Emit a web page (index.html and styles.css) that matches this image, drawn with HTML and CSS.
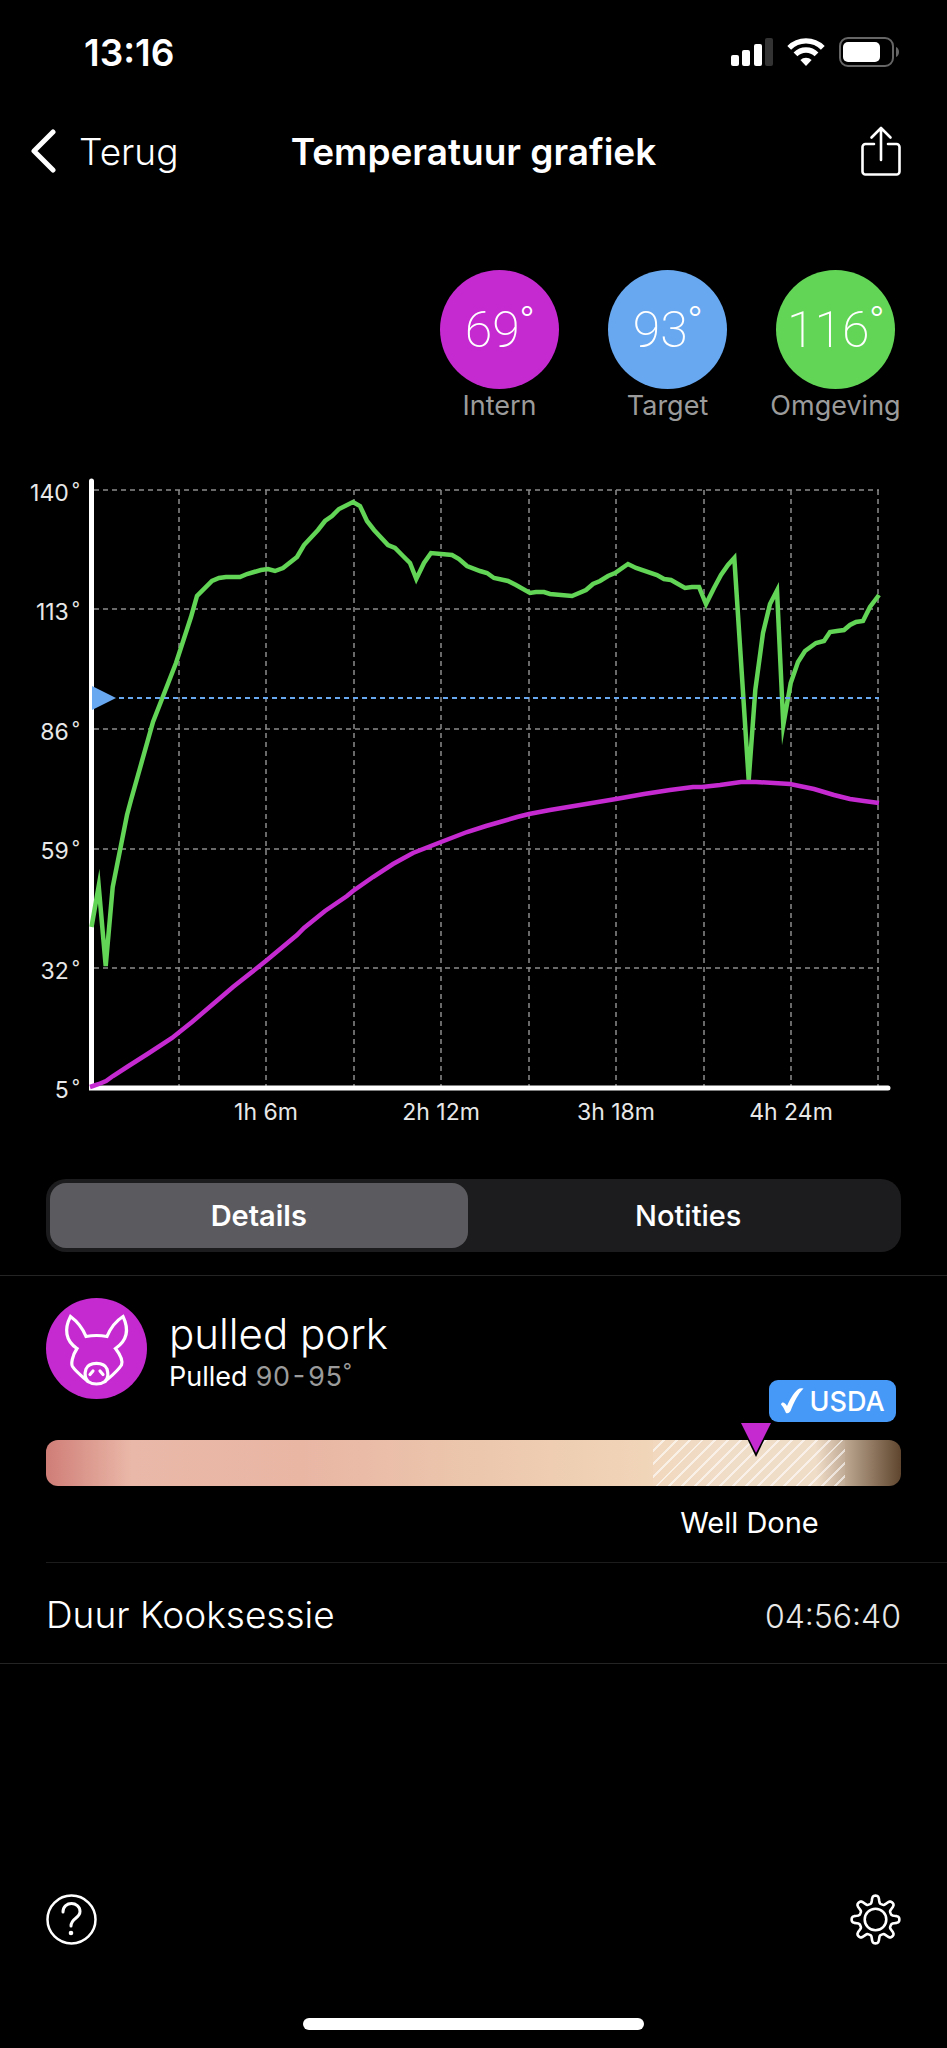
FILE: index.html
```html
<!DOCTYPE html>
<html lang="nl">
<head>
  <meta charset="UTF-8" />
  <meta name="viewport" content="width=device-width, initial-scale=1.0" />
  <title>Temperatuur grafiek</title>
  <link rel="stylesheet" href="styles.css">
</head>
<body>
  <div class="app">
    <div class="status-bar">
      <span class="clock">13:16</span>
      <div class="status-icons">
        <svg width="42" height="28" viewBox="0 0 42 28" fill="#fff">
          <rect x="0" y="17" width="8" height="11" rx="2"/>
          <rect x="11" y="12" width="8" height="16" rx="2"/>
          <rect x="23" y="6" width="8" height="22" rx="2"/>
          <rect x="34" y="0" width="8" height="28" rx="2" fill="#333"/>
        </svg>
        <svg width="38" height="28" viewBox="0 0 38 28" fill="none" stroke="#fff" stroke-width="5.4">
          <path d="M2.2 9.8a23.8 23.8 0 0 1 33.6 0"/>
          <path d="M8.5 16.3a14.8 14.8 0 0 1 21 0"/>
          <path d="M19 28l-5.6-6a8 8 0 0 1 11.2 0z" fill="#fff" stroke="none"/>
        </svg>
        <svg width="60" height="30" viewBox="0 0 60 30">
          <rect x="1" y="1" width="53" height="28" rx="8" fill="none" stroke="#666" stroke-width="2"/>
          <rect x="4" y="5" width="37" height="20" rx="5" fill="#fff"/>
          <path d="M57 10c4 1.500 4 8.500 0 10z" fill="#666"/>
        </svg>
      </div>
    </div>

    <header class="nav">
      <button class="back" type="button">
        <svg width="26" height="44" viewBox="0 0 26 44" fill="none" stroke="#fff" stroke-width="5" stroke-linecap="round" stroke-linejoin="round"><path d="M23 3L4 22l19 19"/></svg>
        <span>Terug</span>
      </button>
      <h1>Temperatuur grafiek</h1>
      <button class="share" type="button" aria-label="Delen">
        <svg width="40" height="50" viewBox="0 0 40 50" fill="none" stroke="#fff" stroke-width="2.600" stroke-linecap="round" stroke-linejoin="round">
          <path d="M13 18H4.500a3 3 0 0 0-3 3v24.500a3 3 0 0 0 3 3h31a3 3 0 0 0 3-3V21a3 3 0 0 0-3-3H27M20 34V2M10.500 11.500L20 2l9.500 9.500"/>
        </svg>
      </button>
    </header>

    <section class="probes">
      <div class="probe">
        <div class="circle intern"><span>69<span class="deg">°</span></span></div>
        <div class="probe-name">Intern</div>
      </div>
      <div class="probe">
        <div class="circle target"><span>93<span class="deg">°</span></span></div>
        <div class="probe-name">Target</div>
      </div>
      <div class="probe">
        <div class="circle omgeving"><span>116<span class="deg">°</span></span></div>
        <div class="probe-name">Omgeving</div>
      </div>
    </section>

    <svg class="chart" viewBox="0 470 947 660" role="img" aria-label="Temperatuur grafiek">
      <g class="grid-lines">
        <path d="M94 490H879M94 609H879M94 729H879M94 849H879M94 968H879"/>
        <path d="M179 490V1086M266 490V1086M354 490V1086M441 490V1086M529 490V1086M616 490V1086M704 490V1086M791 490V1086M878 490V1086"/>
      </g>
      <path class="axis" d="M91.500 481V1088H888"/>

      <polyline class="line green" points="91.500,927 98.700,886 105.700,966 112.700,887 127,815 131,800 153,722 176,663 191,617 197,596 212,581 219,578 226,577 240,577 247,574 254,572 261,570 268,569 275,571 283,568 297,557 304,545 318,530 325,521 332,516 339,509 353,502 360,506 367,521 374,530 388,545 395,548 403,556 410,563 416.300,579 424,563 431,553 452,555 459,559 467,566 480,571 487,573 494,578 508,581 516,585 530,593 536,592 544,592 550,594 572,596 586,590 593,584 600,581 608,576 615,573 628,564 636,568 657,575 664,579 671,580 685,588 692,587 699,587 706,604 714,588 721,575 728,565 734.300,558 748.700,780 755.300,690 763,633 770,604 777,590.500 783.300,725 790.700,683 798,662 805,651 816,643 824,641 830,632 837,631 844,630 850,625 856,622 863,621 870,607 879,595"/>
      <polyline class="line magenta" points="90,1087 99,1084 106,1081 113,1076 127,1067 149,1053 172,1038 192,1022 226,993 233,987 257,968 267,960 297,935 304,928 325,911 347,896 353,891 373,877 393,864 413,853 441,842 467,832 486,826 500,822 517,817 529,814 550,810 574,806 616,799 644,794 670,790 693,787 702,787 720,785 741,782 756,782 790,784 814,789 834,795 850,799 864,801 879,803"/>
      <path class="target-line" d="M119 698H879"/>
      <path class="target-arrow" d="M92 686L116 698L92 710z"/>

      <g class="tick y-tick">
        <text x="80" y="501">140<tspan class="tick-deg" dx="3" dy="-5">°</tspan></text>
        <text x="80" y="620">113<tspan class="tick-deg" dx="3" dy="-5">°</tspan></text>
        <text x="80" y="740">86<tspan class="tick-deg" dx="3" dy="-5">°</tspan></text>
        <text x="80" y="859">59<tspan class="tick-deg" dx="3" dy="-5">°</tspan></text>
        <text x="80" y="979">32<tspan class="tick-deg" dx="3" dy="-5">°</tspan></text>
        <text x="80" y="1098">5<tspan class="tick-deg" dx="3" dy="-5">°</tspan></text>
      </g>
      <g class="tick x-tick">
        <text x="266" y="1120">1h 6m</text>
        <text x="441" y="1120">2h 12m</text>
        <text x="616" y="1120">3h 18m</text>
        <text x="791" y="1120">4h 24m</text>
      </g>
    </svg>

    <div class="tabs" role="tablist">
      <button class="tab active" type="button" role="tab" aria-selected="true">Details</button>
      <button class="tab" type="button" role="tab" aria-selected="false">Notities</button>
    </div>

    <section class="details">
      <div class="meat">
        <svg class="pig" width="101" height="101" viewBox="0 0 101 101">
          <circle cx="50.500" cy="50.500" r="50.500" fill="#c42ad0"/>
          <g fill="none" stroke="#fff" stroke-width="3.200" stroke-linecap="round" stroke-linejoin="miter">
            <path d="M40 38.500C37 31 32 24 24.500 18.500C18 31 19.500 43 31 50.500C26 58 25 66 26.500 68.500C30 74 37 79 42 83.500Q45.500 86 50.500 86T59 83.500C64 79 71 74 75.500 67C77 63 74.500 57 69.500 50.500C80.500 43 83.500 32 77 18.500C70 23 64.500 30 61 38.500Q50.500 36.500 40 38.500z"/>
            <path d="M42 83.500C38 79 39 74 40 71C43 63.500 58 63.500 61 71C62 75 63 79 59 83.500M47 73l-3 3.500M54 73l3 3.500"/>
          </g>
        </svg>
        <div class="meat-text">
          <h2>pulled pork</h2>
          <p>Pulled <span class="meat-range">90-95<span class="deg">°</span></span></p>
        </div>
        <div class="badge">
          <svg width="24" height="26" viewBox="0 0 24 26" fill="#fff"><path d="M1 16.500C2 13 5 14.500 7 18C11 9 15 3 19.500 0.500Q22 0 23.500 0.500C18 6 14 14 10.500 23Q8.500 26 6 25C4.500 22 3.500 19 1 16.500z"/></svg>
          <span>USDA</span>
        </div>
      </div>

      <div class="scale">
        <div class="scale-range"></div>
        <svg class="scale-marker" width="34" height="36" viewBox="0 0 34 36"><path d="M0 0H34L17 35z" fill="#000"/><path d="M2 1H32L17 31z" fill="#c42ad0"/></svg>
      </div>
      <div class="scale-label">Well Done</div>

      <div class="row">
        <span class="row-name">Duur Kooksessie</span>
        <span class="row-value">04:56:40</span>
      </div>
    </section>

    <footer class="toolbar">
      <button type="button" aria-label="Help">
        <svg width="51" height="51" viewBox="0 0 51 51" fill="none" stroke="#fff" stroke-width="2.500" stroke-linecap="round">
          <circle cx="25.500" cy="25.500" r="24"/>
          <path d="M17 18C17 6.500 34 7 34 17.500C34 24.500 25 24 25 32" stroke-width="3"/>
          <circle cx="25" cy="39" r="2.300" fill="#fff" stroke="none"/>
        </svg>
      </button>
      <button type="button" aria-label="Instellingen">
        <svg width="51" height="51" viewBox="-25.500 -25.500 51 51" fill="none" stroke="#fff" stroke-width="2.600" stroke-linejoin="round">
          <circle r="10.800"/>
          <path id="gear"/>
        </svg>
      </button>
    </footer>
    <div class="home-indicator"></div>
  </div>

  <script>
    // outline of the settings gear, 8 rounded teeth
    const steps = 160;
    let d = "";
    for (let i = 0; i < steps; i++) {
      const a = i / steps * Math.PI * 2;
      const wave = Math.tanh(2 * (Math.cos(8 * a) - 0.15));
      const r = 20.2 + 3.9 * wave;
      d += (i ? "L" : "M") + (r * Math.cos(a)).toFixed(2) + " " + (r * Math.sin(a)).toFixed(2);
    }
    document.getElementById("gear").setAttribute("d", d + "z");
  </script>
</body>
</html>
```

FILE: styles.css
```css
* {
  box-sizing: border-box;
}

body {
  margin: 0;
  background-color: #000;
  color: #fff;
  font-family: Inter, "Liberation Sans", sans-serif;
}

button {
  background: none;
  border: none;
  padding: 0;
  color: inherit;
  font-family: inherit;
  cursor: pointer;
}

svg {
  display: block;
}

.app {
  display: flex;
  flex-direction: column;
  min-height: 100vh;
}

.status-bar {
  display: flex;
  justify-content: space-between;
  align-items: center;
  height: 104px;
  padding: 0 48px 0 84px;
}

.clock {
  font-size: 37px;
  font-weight: 600;
}

.status-icons {
  display: flex;
  align-items: center;
  gap: 14px;
}

.nav {
  display: grid;
  grid-template-columns: 1fr auto 1fr;
  align-items: center;
  height: 94px;
  padding: 0 46px 0 30px;
}

.back {
  display: flex;
  align-items: center;
  gap: 23px;
  font-size: 37px;
  font-weight: 300;
}

.nav h1 {
  margin: 0;
  padding-left: 16px;
  font-size: 37px;
  font-weight: 600;
}

.share {
  justify-self: end;
}

.probes {
  display: flex;
  justify-content: flex-end;
  gap: 49px;
  padding: 72px 52px 0 0;
}

.probe {
  display: flex;
  flex-direction: column;
  align-items: center;
  width: 119px;
}

.circle {
  display: flex;
  justify-content: center;
  align-items: center;
  width: 119px;
  height: 119px;
  border-radius: 50%;
  font-family: Roboto, Inter, sans-serif;
  font-size: 50px;
  font-weight: 200;
}

.circle.intern {
  background-color: #c42ad0;
}

.circle.target {
  background-color: #68a8f0;
}

.circle.omgeving {
  background-color: #62d456;
}

.deg {
  font-size: 20px;
  line-height: 0;
  vertical-align: 8px;
}

.circle .deg {
  font-family: Inter, sans-serif;
  font-size: 32px;
  font-weight: 300;
  vertical-align: 17px;
}

.probe-name {
  color: #9b9b9b;
  font-size: 27px;
  line-height: 34px;
}

.chart {
  width: 100%;
  margin-top: 47px;
}

.grid-lines {
  fill: none;
  stroke: #8c8c8c;
  stroke-width: 1.5;
  stroke-dasharray: 5 4;
}

.axis {
  fill: none;
  stroke: #fff;
  stroke-width: 5;
  stroke-linecap: round;
}

.line {
  fill: none;
  stroke-width: 4.5;
  stroke-miterlimit: 10;
}

.line.green {
  stroke: #62d456;
}

.line.magenta {
  stroke: #c42ad0;
}

.target-line {
  stroke: #68a8f0;
  stroke-width: 2;
  stroke-dasharray: 5 4;
}

.target-arrow {
  fill: #68a8f0;
}

.tick {
  fill: #e8e8e8;
  font-size: 23px;
}

.tick-deg {
  font-size: 18px;
}

.y-tick {
  text-anchor: end;
}

.x-tick {
  text-anchor: middle;
}

.tabs {
  display: flex;
  gap: 12px;
  height: 73px;
  margin: 49px 46px 0;
  padding: 4px;
  border-radius: 20px;
  background-color: #1c1c1e;
}

.tab {
  flex: 1;
  border-radius: 16px;
  font-size: 29px;
  font-weight: 500;
}

.tab.active {
  background-color: #5b5b5f;
  font-weight: 600;
}

.details {
  margin-top: 23px;
  border-top: 1px solid #242424;
  border-bottom: 1px solid #242424;
}

.meat {
  display: flex;
  align-items: flex-start;
  height: 146px;
  padding: 22px 51px 0 46px;
}

.meat-text {
  flex: 1;
  padding: 10px 0 0 22px;
}

.meat-text h2 {
  margin: 0;
  font-size: 42px;
  font-weight: 300;
  line-height: 52px;
}

.meat-text p {
  margin: 0;
  font-size: 27px;
  line-height: 34px;
}

.meat-range {
  color: #9b9b9b;
  font-variant-numeric: tabular-nums;
}

.badge {
  display: flex;
  align-items: center;
  justify-content: center;
  align-self: flex-end;
  gap: 5px;
  width: 127px;
  height: 42px;
  border-radius: 9px;
  background-color: #4799f8;
  font-size: 27px;
  font-weight: 500;
}

.scale {
  position: relative;
  height: 46px;
  margin: 18px 46px 0;
  border-radius: 12px;
  background: linear-gradient(90deg, #cf7d77 0, #eab8a8 10%, #e9b6a4 30%, #ecc8ae 52%, #f1d5b9 70%, #f0dcc6 80%, #f0dcc6 90%, #5f452e 100%);
}

.scale-range {
  position: absolute;
  top: 0;
  bottom: 0;
  left: 71%;
  width: 22.5%;
  background-color: rgba(255, 255, 255, 0.05);
  background-image: repeating-linear-gradient(135deg, transparent 0 7px, rgba(255, 255, 255, 0.6) 7px 9px);
}

.scale-marker {
  position: absolute;
  top: -18px;
  left: 81%;
}

.scale-label {
  width: 32%;
  margin: 17px 46px 0 auto;
  font-size: 29px;
  line-height: 40px;
  text-align: center;
}

.row {
  display: flex;
  justify-content: space-between;
  align-items: baseline;
  height: 101px;
  margin: 19px 0 0 46px;
  padding: 29px 46px 0 0;
  border-top: 1px solid #1c1c1c;
  font-weight: 300;
}

.row-name {
  font-size: 37px;
}

.row-value {
  color: #e8e8e8;
  font-size: 32px;
}

.toolbar {
  display: flex;
  justify-content: space-between;
  margin-top: auto;
  padding: 0 46px;
}

.home-indicator {
  width: 36%;
  height: 12px;
  margin: 73px auto 18px;
  border-radius: 6px;
  background-color: #fff;
}
```
